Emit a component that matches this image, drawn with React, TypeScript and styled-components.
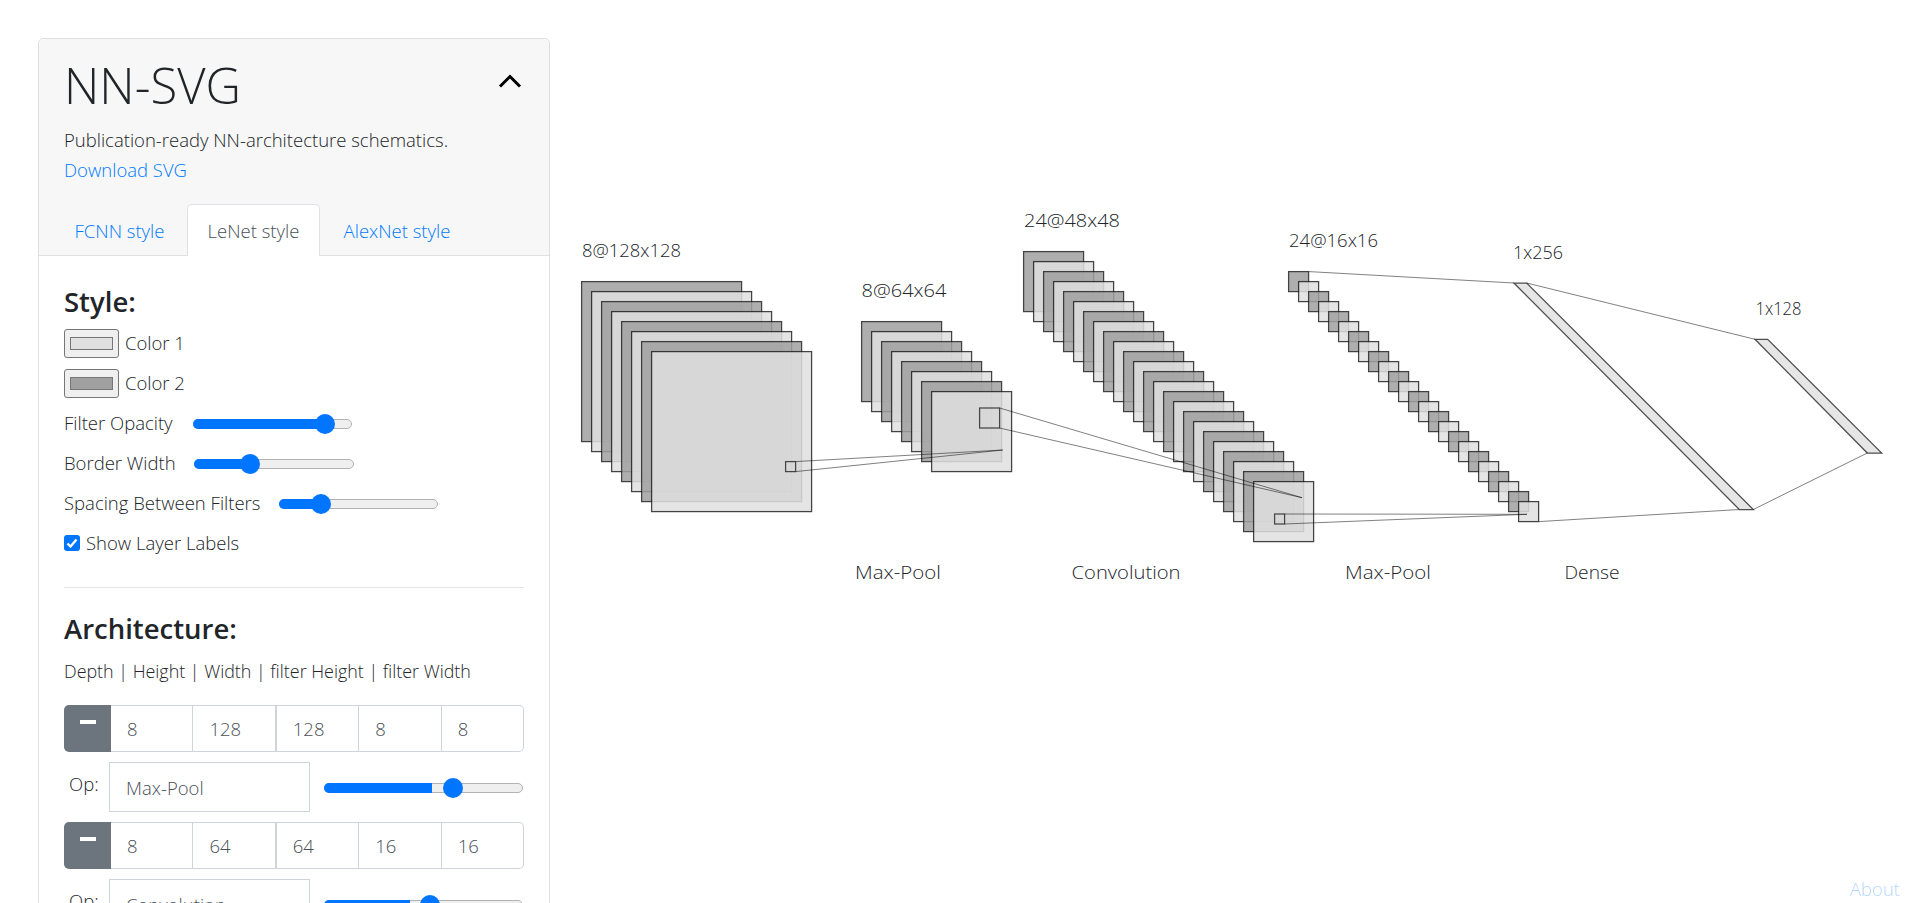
import React from 'react';
import styled, { createGlobalStyle } from 'styled-components';

const FONT = '"Open Sans", "Noto Sans", "Liberation Sans", sans-serif';

const GlobalStyle = createGlobalStyle`
  html, body {
    margin: 0;
    padding: 0;
    height: 100%;
    overflow: hidden;
    background: #fff;
  }
  body {
    font-family: ${FONT};
    font-weight: 300;
    font-size: 18.5px;
    color: #212529;
  }
`;

const Page = styled.div`
  display: flex;
  align-items: flex-start;
  height: 903px;
  box-sizing: border-box;
  padding: 38px 0 0 38px;
  overflow: hidden;
`;

const Card = styled.div`
  flex: none;
  width: 512px;
  box-sizing: border-box;
  border: 1px solid #dfdfdf;
  border-radius: 5px;
`;

const CardHeader = styled.div`
  background: #f7f7f7;
  border-bottom: 1px solid #dfdfdf;
  border-radius: 5px 5px 0 0;
  padding: 12px 0 0 25px;
  height: 217px;
  box-sizing: border-box;
`;

const TitleRow = styled.div`
  display: flex;
  justify-content: space-between;
  align-items: center;
  padding-right: 27px;
  height: 68px;
`;

const Title = styled.h1`
  margin: 0;
  font-size: 49px;
  font-weight: 300;
  line-height: 68px;
  color: #212529;
`;

const Chevron = styled.svg`
  display: block;
  width: 24px;
  height: 16px;
  margin-top: -8px;
`;

const Lead = styled.div`
  margin-top: 6px;
  line-height: 30px;
  white-space: nowrap;
`;

const HeaderLink = styled.a`
  display: block;
  line-height: 30px;
  color: #007bff;
  text-decoration: none;
`;

const Tabs = styled.div`
  display: flex;
  margin: 19px 0 0 -12px;
`;

const Tab = styled.div<{ $width: number; $active?: boolean }>`
  box-sizing: border-box;
  width: ${(p) => p.$width}px;
  height: 52px;
  line-height: 52px;
  text-align: center;
  white-space: nowrap;
  border: 1px solid ${(p) => (p.$active ? '#dee2e6' : 'transparent')};
  border-bottom: 0;
  border-radius: 5px 5px 0 0;
  background: ${(p) => (p.$active ? '#fff' : 'transparent')};
  color: ${(p) => (p.$active ? '#495057' : '#007bff')};
`;

const CardBody = styled.div`
  padding: 32px 25px 0;
`;

const Heading = styled.h4`
  margin: 0;
  font-size: 27.5px;
  font-weight: 600;
  line-height: 27px;
  color: #212529;
`;

const Controls = styled.div`
  margin-top: 8px;
`;

const Row = styled.div`
  display: flex;
  align-items: center;
  height: 40px;
  white-space: nowrap;
`;

const RowText = styled.span<{ $width?: number }>`
  flex: none;
  margin-top: -2px;
  ${(p) => (p.$width ? `width: ${p.$width}px;` : '')}
`;

const Swatch = styled.div<{ $color: string }>`
  flex: none;
  box-sizing: border-box;
  width: 55px;
  height: 29px;
  margin-right: 6px;
  padding: 7px 5px;
  background: #efefef;
  border: 1px solid #767676;
  border-radius: 3px;
  &::after {
    content: '';
    display: block;
    height: 100%;
    box-sizing: border-box;
    background: ${(p) => p.$color};
    border: 1px solid #767676;
  }
`;

const Track = styled.div<{ $width: number }>`
  position: relative;
  flex: none;
  box-sizing: border-box;
  width: ${(p) => p.$width}px;
  height: 10px;
  margin-top: 1px;
  background: #efefef;
  border: 1px solid #b2b2b2;
  border-radius: 5px;
`;

const TrackFill = styled.div<{ $end: number }>`
  position: absolute;
  left: -1px;
  top: -1px;
  width: ${(p) => p.$end}px;
  height: 10px;
  background: #0075ff;
  border-radius: 5px 0 0 5px;
`;

const Thumb = styled.div<{ $center: number }>`
  position: absolute;
  left: ${(p) => p.$center - 11}px;
  top: -6px;
  width: 20px;
  height: 20px;
  background: #0075ff;
  border-radius: 50%;
`;

const Slider = ({ width, fill, thumb }: { width: number; fill: number; thumb: number }) => (
  <Track $width={width}>
    <TrackFill $end={fill} />
    <Thumb $center={thumb} />
  </Track>
);

const CheckBox = styled.span`
  flex: none;
  display: flex;
  align-items: center;
  justify-content: center;
  width: 16px;
  height: 16px;
  margin-right: 6px;
  background: #0075ff;
  border-radius: 3px;
`;

const Divider = styled.hr`
  margin: 24px 0 26.5px;
  border: 0;
  border-top: 1px solid #e6e6e6;
`;

const Hint = styled.div`
  margin-top: 14.5px;
  font-size: 17.9px;
  line-height: 30px;
  white-space: nowrap;
`;

const LayerList = styled.div`
  display: flex;
  flex-direction: column;
  gap: 10px;
  margin-top: 19px;
`;

const InputGroup = styled.div`
  display: flex;
  height: 47px;
`;

const RemoveButton = styled.div`
  flex: none;
  width: 47px;
  display: flex;
  justify-content: center;
  padding-top: 15px;
  box-sizing: border-box;
  background: #6c757d;
  border-radius: 5px 0 0 5px;
  &::after {
    content: '';
    width: 16px;
    height: 4px;
    background: #fff;
  }
`;

const Cell = styled.div<{ $thick?: boolean }>`
  flex: 1;
  box-sizing: border-box;
  padding-left: 16px;
  line-height: 46px;
  color: #495057;
  border: 1px solid #ced4da;
  border-left: 0;
  border-right-width: ${(p) => (p.$thick ? '2px' : '1px')};
  &:last-child {
    border-radius: 0 5px 5px 0;
  }
`;

const OpRow = styled.div`
  display: flex;
  align-items: center;
  height: 50px;
`;

const OpLabel = styled.span`
  flex: none;
  width: 45px;
  padding-left: 5px;
  box-sizing: border-box;
  margin-top: -8px;
`;

const OpInput = styled.div`
  flex: none;
  width: 201px;
  height: 50px;
  box-sizing: border-box;
  margin-right: 14px;
  padding-left: 16px;
  line-height: 50px;
  color: #495057;
  border: 1px solid #ced4da;
`;

const DiagramSvg = styled.svg`
  flex: none;
  display: block;
`;

const DiagramLabel = styled.text`
  font-family: ${FONT};
  font-weight: 300;
  font-size: 19px;
  fill: #212529;
`;

const AboutLink = styled.a`
  position: fixed;
  right: 20px;
  bottom: 2px;
  line-height: 24px;
  color: #007bff;
  opacity: 0.3;
  text-decoration: none;
`;

const COLOR_1 = '#e0e0e0';
const COLOR_2 = '#a0a0a0';
const STROKE = '#222';

const stacks = [
  { x: 581.6, y: 281.6, size: 160, count: 8 },
  { x: 861.6, y: 321.6, size: 80, count: 8 },
  { x: 1023.6, y: 251.6, size: 60, count: 24 },
  { x: 1288.6, y: 271.6, size: 20, count: 24 },
];

const kernels = [
  { x: 785.6, y: 461.6, size: 10 },
  { x: 979.6, y: 408, size: 20 },
  { x: 1274.6, y: 514, size: 10 },
];

const links = [
  [795.6, 461.6, 1002.7, 450],
  [795.6, 471.6, 1002.7, 450],
  [999.6, 408, 1302, 497.7],
  [999.6, 428, 1302, 497.7],
  [1284.6, 514, 1527, 514.3],
  [1284.6, 524, 1527, 514.3],
  [1309, 271.6, 1514, 283],
  [1539, 521.6, 1739.3, 509.5],
  [1526.7, 283, 1755, 339.3],
  [1753.3, 509.5, 1867.3, 453],
];

const labels = [
  { x: 582, y: 256.5, text: '8@128x128', width: 99 },
  { x: 861.5, y: 296.5, text: '8@64x64', width: 85 },
  { x: 1024, y: 226.5, text: '24@48x48', width: 96 },
  { x: 1289, y: 246.5, text: '24@16x16', width: 89 },
  { x: 1513, y: 259, text: '1x256', width: 50 },
  { x: 1755.5, y: 315, text: '1x128', width: 46 },
  { x: 855, y: 579, text: 'Max-Pool', width: 86 },
  { x: 1071.5, y: 579, text: 'Convolution', width: 109 },
  { x: 1345, y: 579, text: 'Max-Pool', width: 86 },
  { x: 1564.5, y: 579, text: 'Dense', width: 55 },
];

const Diagram = () => (
  <DiagramSvg width={1370} height={865} viewBox="550 38 1370 865">
    {stacks.map((stack) =>
      Array.from({ length: stack.count }, (_, i) => (
        <rect
          key={`${stack.x}-${i}`}
          x={stack.x + i * 10}
          y={stack.y + i * 10}
          width={stack.size}
          height={stack.size}
          fill={i % 2 === 0 ? COLOR_2 : COLOR_1}
          stroke={STROKE}
          strokeWidth={1.25}
          opacity={0.85}
        />
      )),
    )}
    <polygon points="1514,283 1526.7,283 1753.3,509.5 1739.3,509.5" fill={COLOR_1} stroke={STROKE} strokeWidth={1.25} opacity={0.8} />
    <polygon points="1755,339.3 1767.7,339.3 1881.7,453 1867.3,453" fill={COLOR_1} stroke={STROKE} strokeWidth={1.25} opacity={0.8} />
    {kernels.map((k) => (
      <rect key={k.x} x={k.x} y={k.y} width={k.size} height={k.size} fill="none" stroke={STROKE} strokeWidth={1.25} opacity={0.8} />
    ))}
    {links.map(([x1, y1, x2, y2]) => (
      <line key={`${x1}-${y1}`} x1={x1} y1={y1} x2={x2} y2={y2} stroke="#000" strokeWidth={0.9} opacity={0.55} />
    ))}
    {labels.map((l) => (
      <DiagramLabel key={`${l.x}-${l.text}`} x={l.x} y={l.y} textLength={l.width} lengthAdjust="spacingAndGlyphs">
        {l.text}
      </DiagramLabel>
    ))}
  </DiagramSvg>
);

const LayerRow = ({ values, op, fill, thumb }: { values: number[]; op: string; fill: number; thumb: number }) => (
  <>
    <InputGroup>
      <RemoveButton />
      {values.map((value, i) => (
        <Cell key={i} $thick={i === 1}>
          {value}
        </Cell>
      ))}
    </InputGroup>
    <OpRow>
      <OpLabel>Op:</OpLabel>
      <OpInput>{op}</OpInput>
      <Slider width={199} fill={fill} thumb={thumb} />
    </OpRow>
  </>
);

const App = () => (
  <Page>
    <GlobalStyle />
    <Card>
      <CardHeader>
        <TitleRow>
          <Title>NN-SVG</Title>
          <Chevron viewBox="0 0 24 16">
            <polyline points="2,13.5 12,3.5 22,13.5" fill="none" stroke="#000" strokeWidth={3} />
          </Chevron>
        </TitleRow>
        <Lead>Publication-ready NN-architecture schematics.</Lead>
        <HeaderLink href="#">Download SVG</HeaderLink>
        <Tabs>
          <Tab $width={135}>FCNN style</Tab>
          <Tab $width={133} $active>
            LeNet style
          </Tab>
          <Tab $width={154}>AlexNet style</Tab>
        </Tabs>
      </CardHeader>
      <CardBody>
        <Heading>Style:</Heading>
        <Controls>
          <Row>
            <Swatch $color={COLOR_1} />
            <RowText>Color 1</RowText>
          </Row>
          <Row>
            <Swatch $color={COLOR_2} />
            <RowText>Color 2</RowText>
          </Row>
          <Row>
            <RowText $width={129}>Filter Opacity</RowText>
            <Slider width={159} fill={132} thumb={132} />
          </Row>
          <Row>
            <RowText $width={130}>Border Width</RowText>
            <Slider width={160} fill={56} thumb={56} />
          </Row>
          <Row>
            <RowText $width={215}>Spacing Between Filters</RowText>
            <Slider width={159} fill={42} thumb={42} />
          </Row>
          <Row>
            <CheckBox>
              <svg width="12" height="12" viewBox="0 0 12 12">
                <polyline points="1.5,6.5 4.5,9.5 10.5,2.5" fill="none" stroke="#fff" strokeWidth={2.4} />
              </svg>
            </CheckBox>
            <RowText>Show Layer Labels</RowText>
          </Row>
        </Controls>
        <Divider />
        <Heading>Architecture:</Heading>
        <Hint>Depth | Height | Width | filter Height | filter Width</Hint>
        <LayerList>
          <LayerRow values={[8, 128, 128, 8, 8]} op="Max-Pool" fill={108} thumb={129} />
          <LayerRow values={[8, 64, 64, 16, 16]} op="Convolution" fill={86} thumb={106} />
        </LayerList>
      </CardBody>
    </Card>
    <Diagram />
    <AboutLink href="#">About</AboutLink>
  </Page>
);

export default App;
